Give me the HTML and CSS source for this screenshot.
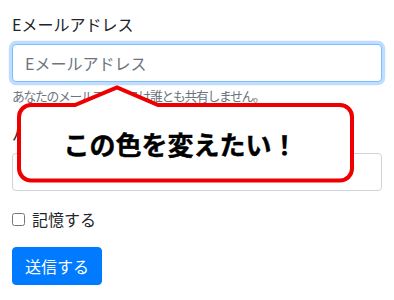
FILE: index.html
```html
<!DOCTYPE html>
<html lang="ja">
<head>
<meta charset="utf-8">
<link rel="stylesheet" href="styles.css">
</head>
<body>
<form class="page">
  <div class="form-group">
    <label class="label">Eメールアドレス</label>
    <input class="form-control focused" type="email" placeholder="Eメールアドレス">
    <small class="form-text">あなたのメールアドレスは誰とも共有しません。</small>
  </div>
  <div class="form-group">
    <label class="label">パスワード</label>
    <input class="form-control" type="password">
  </div>
  <div class="form-check">
    <input class="check-input" type="checkbox" id="remember">
    <label class="check-label" for="remember">記憶する</label>
  </div>
  <button class="btn" type="button">送信する</button>

  <div class="callout">
    <svg class="callout-shape" width="337" height="99" viewBox="0 0 337 99">
      <path d="M 14 20 L 58 20 L 100 2.5 L 141 20 L 323 20 A 12 12 0 0 1 335 32 L 335 83.5 A 12 12 0 0 1 323 95.5 L 14 95.5 A 12 12 0 0 1 2 83.5 L 2 32 A 12 12 0 0 1 14 20 Z" fill="#ffffff" stroke="#ee0000" stroke-width="4" stroke-linejoin="miter"/>
    </svg>
    <span class="callout-text">この色を変えたい！</span>
  </div>
</form>
</body>
</html>
```

FILE: styles.css
```css
* { box-sizing: border-box; }

html, body {
  margin: 0;
  padding: 0;
  background: #ffffff;
}

body {
  font-family: "Segoe UI", "Noto Sans CJK JP", "Noto Sans", sans-serif;
  font-size: 16px;
  line-height: 1.5;
  color: #212529;
}

.page {
  position: relative;
  padding: 12px;
  margin: 0;
}

.form-group {
  margin-bottom: 16px;
}

.label {
  display: block;
  margin-bottom: 8px;
  height: 24px;
}

.form-control {
  display: block;
  width: 100%;
  height: 38px;
  padding: 6px 12px;
  font-family: inherit;
  font-size: 16px;
  line-height: 1.5;
  color: #495057;
  background: #ffffff;
  border: 1px solid #ced4da;
  border-radius: 4px;
  margin: 0;
  outline: none;
}

.form-control::placeholder {
  color: #6c757d;
  opacity: 1;
}

.focused {
  border-color: #80bdff;
  box-shadow: 0 0 0 3.2px rgba(0, 123, 255, 0.25);
}

.form-text {
  display: block;
  margin-top: 4px;
  font-size: 12.8px;
  line-height: 1.5;
  color: #6c757d;
  letter-spacing: -1.3px;
}

.form-check {
  position: relative;
  display: block;
  padding-left: 20px;
  margin-bottom: 16px;
  height: 24px;
}

.check-input {
  position: absolute;
  left: 0;
  top: 0;
  margin: 6px 0 0 0;
  width: 13px;
  height: 13px;
}

.check-label {
  display: inline-block;
}

.btn {
  display: inline-block;
  font-family: inherit;
  font-size: 16px;
  line-height: 1.5;
  padding: 6px 12px;
  color: #ffffff;
  background: #007bff;
  border: 1px solid #007bff;
  border-radius: 4px;
  margin: 0;
}

.callout {
  position: absolute;
  left: 17px;
  top: 85px;
  width: 337px;
  height: 99px;
}

.callout-shape {
  position: absolute;
  left: 0;
  top: 0;
  display: block;
}

.callout-text {
  position: absolute;
  left: 2px;
  right: 12px;
  top: 20px;
  bottom: 3px;
  display: flex;
  align-items: center;
  justify-content: center;
  font-family: "Noto Sans CJK JP", sans-serif;
  font-weight: 700;
  font-size: 26px;
  letter-spacing: 0;
  color: #000000;
  -webkit-text-stroke: 0.4px #000000;
}
```
